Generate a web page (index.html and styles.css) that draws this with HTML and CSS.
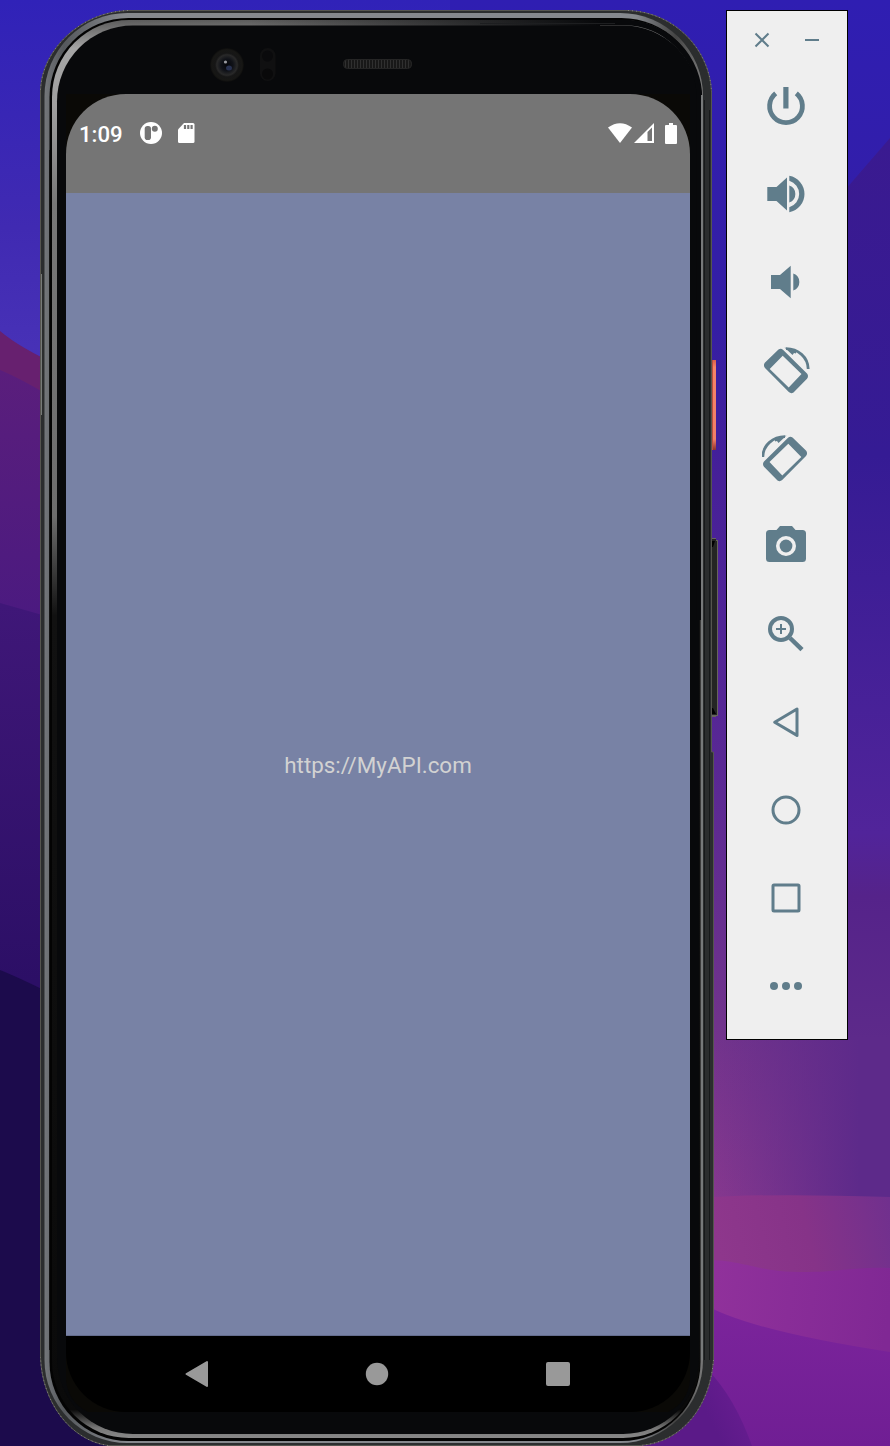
FILE: index.html
```html
<!DOCTYPE html>
<html lang="en">
<head>
<meta charset="utf-8">
<title>Android Emulator</title>
<link rel="stylesheet" href="styles.css">
</head>
<body>
<main class="desktop">
  <svg class="wallpaper" viewBox="0 0 890 1446" preserveAspectRatio="none" aria-hidden="true">
    <defs>
      <linearGradient id="sky" x1="0" y1="0" x2="0" y2="380" gradientUnits="userSpaceOnUse"><stop offset="0" stop-color="#3022b8"/><stop offset=".6" stop-color="#402ab2"/><stop offset="1" stop-color="#4933b8"/></linearGradient>
      <linearGradient id="hill" x1="0" y1="370" x2="0" y2="620" gradientUnits="userSpaceOnUse"><stop offset="0" stop-color="#5a1e7c"/><stop offset="1" stop-color="#4b1a80"/></linearGradient>
      <linearGradient id="hill2" x1="0" y1="605" x2="0" y2="980" gradientUnits="userSpaceOnUse"><stop offset="0" stop-color="#3f1778"/><stop offset="1" stop-color="#2c0f66"/></linearGradient>
      <linearGradient id="rsky" x1="0" y1="0" x2="0" y2="1200" gradientUnits="userSpaceOnUse"><stop offset="0" stop-color="#2f1eb2"/><stop offset=".27" stop-color="#341ea4"/><stop offset=".4" stop-color="#462098"/><stop offset=".64" stop-color="#592894"/><stop offset=".85" stop-color="#70338c"/><stop offset="1" stop-color="#86388e"/></linearGradient>
      <linearGradient id="redge" x1="0" y1="140" x2="0" y2="1040" gradientUnits="userSpaceOnUse"><stop offset="0" stop-color="#3a1a90"/><stop offset=".35" stop-color="#351b94"/><stop offset=".77" stop-color="#51249a"/><stop offset=".84" stop-color="#55238a"/><stop offset="1" stop-color="#5d2a8a"/></linearGradient>
      <linearGradient id="fadeR" x1="714" x2="860" y1="0" y2="0" gradientUnits="userSpaceOnUse"><stop offset="0" stop-color="#5d2a8a" stop-opacity="0"/><stop offset="1" stop-color="#5d2a8a"/></linearGradient>
      <linearGradient id="w1" x1="714" y1="1230" x2="890" y2="1190" gradientUnits="userSpaceOnUse"><stop offset="0" stop-color="#8e378c"/><stop offset=".5" stop-color="#863388"/><stop offset="1" stop-color="#70308e"/></linearGradient>
      <linearGradient id="w2" x1="714" y1="1280" x2="890" y2="1300" gradientUnits="userSpaceOnUse"><stop offset="0" stop-color="#90319b"/><stop offset="1" stop-color="#802894"/></linearGradient>
      <linearGradient id="w3" x1="0" y1="1310" x2="0" y2="1446" gradientUnits="userSpaceOnUse"><stop offset="0" stop-color="#7b249b"/><stop offset="1" stop-color="#701e94"/></linearGradient>
      <linearGradient id="w4" x1="700" y1="1400" x2="760" y2="1370" gradientUnits="userSpaceOnUse"><stop offset="0" stop-color="#5b1a88"/><stop offset="1" stop-color="#701f96"/></linearGradient>
    </defs>
    <rect width="890" height="1446" fill="url(#sky)"/>
    <path d="M0 331Q20 348 60 366V660H0Z" fill="#67206f"/>
    <path d="M0 370Q20 378 60 402V660H0Z" fill="url(#hill)"/>
    <path d="M0 603L60 620V1000H0Z" fill="url(#hill2)"/>
    <path d="M0 970Q20 978 60 998V1446H0Z" fill="#1c0b4c"/>
    <path d="M450 0H890V1446H450Z" fill="url(#rsky)"/>
    <path d="M890 138L845 190V1040H890Z" fill="url(#redge)"/>
    <rect x="700" y="1039" width="190" height="170" fill="url(#fadeR)"/>
    <path d="M0 1380H300V1446H0Z" fill="#1c0b4c"/>
    <path d="M700 1198Q760 1193 890 1197V1300H700Z" fill="url(#w1)"/>
    <path d="M700 1260C745 1259 755 1272 800 1272S850 1267 890 1268V1400H700Z" fill="url(#w2)"/>
    <path d="M700 1302Q745 1330 890 1352V1446H600V1302Z" fill="url(#w3)"/>
    <path d="M600 1370H708Q735 1398 752 1446H600Z" fill="url(#w4)"/>
  </svg>

  <section class="phone">
    <svg class="chassis" viewBox="40 10 678 1436" aria-hidden="true">
      <defs>
        <linearGradient id="rim" x1="44" x2="702" y1="0" y2="0" gradientUnits="userSpaceOnUse"><stop offset="0" stop-color="#74777b"/><stop offset=".03" stop-color="#55585c"/><stop offset=".12" stop-color="#85888d"/><stop offset=".9" stop-color="#85888d"/><stop offset=".96" stop-color="#444"/><stop offset="1" stop-color="#777"/></linearGradient>
        <linearGradient id="glint" x1="0" x2="0" y1="20" y2="1438" gradientUnits="userSpaceOnUse"><stop offset="0" stop-color="#5c5c5c"/><stop offset=".02" stop-color="#a5a5a5"/><stop offset=".06" stop-color="#a0a0a0"/><stop offset=".13" stop-color="#777"/><stop offset=".35" stop-color="#6d6d6d"/><stop offset=".42" stop-color="#111"/><stop offset=".98" stop-color="#0a0a0a"/><stop offset=".993" stop-color="#777"/><stop offset="1" stop-color="#888"/></linearGradient>
        <linearGradient id="dim" x1="250" x2="600" y1="0" y2="0" gradientUnits="userSpaceOnUse"><stop offset="0" stop-color="#08090b" stop-opacity="0"/><stop offset="1" stop-color="#08090b"/></linearGradient>
        <linearGradient id="power" x1="0" x2="0" y1="360" y2="450" gradientUnits="userSpaceOnUse"><stop offset="0" stop-color="#d9604a"/><stop offset=".08" stop-color="#f58468"/><stop offset=".88" stop-color="#f08068"/><stop offset="1" stop-color="#8b302c"/></linearGradient>
        <radialGradient id="lens"><stop offset="0" stop-color="#05060b"/><stop offset=".35" stop-color="#101218"/><stop offset=".6" stop-color="#292929"/><stop offset=".7" stop-color="#161616"/><stop offset=".9" stop-color="#171715"/><stop offset="1" stop-color="#0b0b0b"/></radialGradient>
        <pattern id="mesh" width="3" height="3" patternUnits="userSpaceOnUse"><rect width="3" height="3" fill="#181818"/><path d="M0 0H1V3H0Z" fill="#303030"/></pattern>
      </defs>
      <rect x="711" y="360" width="5" height="90" fill="url(#power)"/>
      <rect x="711" y="360" width="2" height="90" fill="#b94f3d"/>
      <path d="M711 538H716V540H718V716H716V717H711Z" fill="#67645d"/>
      <path d="M711 539H716V541H717V715H711Z" fill="#242524"/>
      <path d="M711 541H715L713 547H711ZM711 714H716L713 708H711Z" fill="#000"/>
      <path d="M128 10.5H628C675 12 710 50 711.5 92V752H713.5V1360C710 1405 684 1442 640 1445.5H108C70 1440 42 1402 40.5 1357V90C42 50 80 12 128 10.5Z" fill="#2b2d2e" stroke="#55554f"/>
      <path d="M128 10.5C80 12 42 50 40.5 90M628 10.5C675 12 710 50 711.5 92M713.5 1360C710 1405 684 1442 640 1445.5M108 1445.5C70 1440 42 1402 40.5 1357" fill="none" stroke="#83837c" stroke-dasharray="1 3"/>
      <rect x="44.5" y="13" width="658.5" height="1430" rx="83" fill="url(#rim)"/>
      <rect x="49.5" y="18" width="651" height="1423" rx="79" fill="#030303"/>
      <rect x="52" y="20" width="648" height="1418" rx="77" fill="url(#glint)"/>
      <rect x="57" y="25.500" width="642" height="1408.500" rx="76" fill="#08090b"/>
      <path d="M250 19.500H600V26H250Z" fill="url(#dim)"/>
      <path d="M599 22.500H623A76 76 0 0 1 699.500 99V620" fill="none" stroke="#08090b" stroke-width="5.500"/>
      <path d="M702 95V1360" stroke="#77797a" stroke-width="2"/>
      <path d="M480 23.500H615" stroke="#1d1e20"/>
      <path d="M49.500 1350V150" stroke="#121212"/>
      <path d="M704.5 100V1360M709.500 110V1360" stroke="#17191a"/>
      <path d="M41.500 274V415" stroke="#777a78"/>
      <path d="M66 94H690V1380Q688 1402 668 1412H88Q68 1402 66 1380Z" fill="#0a0906"/>
      <circle cx="227" cy="65" r="17" fill="url(#lens)"/>
      <circle cx="225.500" cy="62" r="1.600" fill="#9a9ba0"/>
      <ellipse cx="229" cy="68" rx="3" ry="2.500" fill="#27304f"/>
      <rect x="260" y="48" width="15.500" height="33" rx="7.700" fill="#101011"/>
      <circle cx="267.500" cy="56" r="5.500" fill="#0a0a0c"/><circle cx="267.500" cy="74" r="5.500" fill="#09090a"/>
      <rect x="343.500" y="59.500" width="68" height="9" rx="4" fill="url(#mesh)" stroke="#252525"/>
    </svg>

    <div class="screen">
      <header class="status">
        <span class="clock">1:09</span>
        <svg class="st-app" width="22" height="22" viewBox="-11 -11 22 22"><circle r="11" fill="#fff"/><rect x="-6.300" y="-7" width="6.300" height="14" rx="2.800" fill="#757575"/><circle cx="3.800" cy="-4.200" r="3" fill="#757575"/></svg>
        <svg class="st-sd" width="17" height="20" viewBox="0 0 17 20"><path d="M6 0H15Q16.500 0 16.500 1.500V18.500Q16.500 20 15 20H1.500Q0 20 0 18.500V6.500Z" fill="#fff"/><path d="M7 2V6M10.300 2V6M13.600 2V6" stroke="#757575" stroke-width="2.200"/></svg>
        <span class="spring"></span>
        <svg width="24" height="20" viewBox="0 0 24 20"><path d="M0 4.500Q12-4 24 4.500L12 20Z" fill="#fff"/></svg>
        <svg class="st-signal" width="20" height="20" viewBox="0 0 20 20"><path d="M0 20L20 0V20Z" fill="#fff"/><path d="M13.500 9L18 4.500V18H13.500Z" fill="#757575"/></svg>
        <svg class="st-batt" width="12" height="21" viewBox="0 0 12 21"><path d="M4 0H8V2H11Q12 2 12 3V20Q12 21 11 21H1Q0 21 0 20V3Q0 2 1 2H4Z" fill="#fff"/></svg>
      </header>
      <div class="content"><p class="url">https://MyAPI.com</p></div>
      <nav class="navbar">
        <svg width="24" height="28" viewBox="0 0 24 28"><path d="M1.500 14L22 2V26Z" fill="#999" stroke="#999" stroke-width="2" stroke-linejoin="round"/></svg>
        <svg width="24" height="24" viewBox="0 0 24 24"><circle cx="12" cy="12" r="11.200" fill="#999"/></svg>
        <svg width="24" height="24" viewBox="0 0 24 24"><rect width="24" height="24" rx="2" fill="#999"/></svg>
      </nav>
    </div>
  </section>

  <aside class="toolbar">
    <div class="window-controls">
      <svg width="16" height="16" viewBox="-8 -8 16 16"><path class="line thin" d="M-6.500-6.500L6.500 6.500M6.500-6.500L-6.500 6.500"/></svg>
      <svg width="16" height="16" viewBox="-8 -8 16 16"><path class="line thin" d="M-7 0H7"/></svg>
    </div>
    <div class="tools">
      <svg viewBox="-24 -24 48 48"><path class="line" stroke-width="4.800" d="M-10.300-12.600A16.400 16.400 0 1 0 10.300-12.600"/><path class="solid" d="M-2.700-19H2.500V2.500H-2.700Z"/></svg>
      <svg viewBox="-24 -24 48 48"><path class="solid" d="M-18.700-7H-9.500L1-16.500V16.500L-9.500 7H-18.700ZM3.300-8.500A9 9 0 0 1 3.300 8.500ZM3.300-18.200A18.500 18.500 0 0 1 3.300 18.200V13.300A13.900 13.900 0 0 0 3.300-13.300Z"/></svg>
      <svg viewBox="-24 -24 48 48"><path class="solid" d="M-15-7H-6L4.700-16.300V16.300L-6 7H-15ZM7.300-8.500A9 9 0 0 1 7.300 8.500Z"/></svg>
      <svg viewBox="-24 -24 48 48"><g id="rotate"><path class="solid" fill-rule="evenodd" d="M-21.200-7.200L-7.500-20.500Q-5-22 -2.800-20L21 3.500Q23 6 21 8.800L7.500 22.500Q5 24 2.800 22L-21-2Q-23-4.500-21.200-7.200ZM-3.300-14.300L-16.300-1L2.700 17.500L15.500 4Z"/><path class="line" stroke-width="2.800" d="M0-21.300C12-21.300 22-13 22.200-1"/><path class="solid" d="M-1.500-22.500L6.500-15L8-17L10-16.500V-20Z"/></g></svg>
      <svg viewBox="-24 -24 48 48"><use href="#rotate" transform="translate(-1 0) scale(-1 1)"/></svg>
      <svg viewBox="-24 -24 48 48"><path class="solid" fill-rule="evenodd" d="M-16.500-16H-9.500L-6-20H6L9.500-16H16.500Q20-16 20-12.500V12.500Q20 16 16.500 16H-16.500Q-20 16-20 12.500V-12.500Q-20-16-16.500-16ZM0-10A10 10 0 1 0 0 10A10 10 0 1 0 0-10Z"/><circle class="solid" r="6.400"/></svg>
      <svg viewBox="-24 -24 48 48"><circle class="line" cx="-5" cy="-5" r="11" stroke-width="4"/><path class="line thin" d="M-10-5H0M-5-10V0"/><path class="line" stroke-width="4.500" d="M4 4L16 15.700"/></svg>
      <svg viewBox="-24 -24 48 48"><path class="line" stroke-width="3" stroke-linejoin="round" d="M-11.300.2L11-13V13.400Z"/></svg>
      <svg viewBox="-24 -24 48 48"><circle class="line" r="13" stroke-width="3"/></svg>
      <svg viewBox="-24 -24 48 48"><rect class="line" x="-13" y="-13" width="26" height="26" rx="1" stroke-width="3"/></svg>
      <svg viewBox="-24 -24 48 48"><g class="solid"><circle cx="-12" r="4"/><circle r="4"/><circle cx="12" r="4"/></g></svg>
    </div>
  </aside>
</main>
</body>
</html>
```
FILE: styles.css
```css
* { box-sizing: border-box; }
html, body { margin: 0; }
body { background: #1c0b4c; font-family: Roboto, sans-serif; }
svg { display: block; flex: none; }

.desktop {
  position: relative;
  display: flex;
  align-items: flex-start;
  width: 890px;
  height: 1446px;
  padding: 10px 0 0 40px;
  gap: 8px;
  overflow: hidden;
}
.wallpaper { position: absolute; inset: 0; width: 100%; height: 100%; }

.phone {
  position: relative;
  flex: none;
  width: 678px;
  height: 1436px;
  padding: 84px 28px 34px 26px;
}
.chassis { position: absolute; inset: 0; width: 100%; height: 100%; }

.screen {
  position: relative;
  display: flex;
  flex-direction: column;
  width: 624px;
  height: 1318px;
  border-radius: 60px;
  overflow: hidden;
}
.status {
  display: flex;
  align-items: center;
  height: 99px;
  padding: 0 13px 21px;
  background: #757575;
  color: #fff;
}
.clock { width: 43px; font-size: 22.2px; font-weight: 500; line-height: 26px; padding-top: 2px; }
.st-app { margin-left: 18px; }
.st-sd { margin-left: 16px; }
.spring { flex: 1; }
.st-signal { margin-left: 2px; }
.st-batt { margin-left: 11px; }

.content {
  flex: 1;
  display: flex;
  align-items: center;
  justify-content: center;
  padding-top: 2px;
  background: #7882a5;
  border-bottom: 1px solid #646d8e;
}
.url { margin: 0; font-size: 22.4px; line-height: 26px; color: #d2d2d2; }

.navbar {
  display: flex;
  align-items: center;
  justify-content: space-between;
  height: 76px;
  padding: 0 120.5px 0 119px;
  background: #000;
}

.toolbar {
  position: relative;
  flex: none;
  width: 122px;
  height: 1030px;
  background: #efefef;
  border: 1px solid #000;
}
.window-controls { display: flex; gap: 34px; padding: 21px 0 0 27px; }
.tools { display: flex; flex-direction: column; gap: 40px; padding: 34px 0 0 35px; }
.tools svg { width: 48px; height: 48px; }
.line { fill: none; stroke: #607d8b; }
.thin { stroke-width: 2px; }
.solid { fill: #607d8b; }
```
